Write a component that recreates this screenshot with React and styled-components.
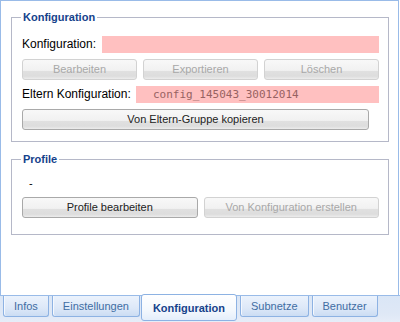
import React from 'react';
import styled, { createGlobalStyle } from 'styled-components';

const GlobalStyle = createGlobalStyle`
  html, body {
    margin: 0;
    padding: 0;
    background: #fff;
  }
  body {
    font-family: "Liberation Sans", Arial, sans-serif;
  }
  #root {
    width: 400px;
    height: 322px;
  }
`;

const Window = styled.div`
  width: 400px;
  height: 322px;
  display: flex;
  flex-direction: column;
  box-sizing: border-box;
`;

const Body = styled.div`
  width: 399px;
  height: 295px;
  box-sizing: border-box;
  border: 1px solid #99bbe8;
  border-bottom: none;
  padding: 10px 9px 0 10px;
  display: flex;
  flex-direction: column;
  gap: 11px;
  background: #fff;
`;

const Fieldset = styled.fieldset`
  margin: 0;
  padding: ${p => p.$pad};
  border: 1px solid #b5b8c8;
  min-inline-size: 0;
  display: flex;
  flex-direction: column;
  gap: 6px;
`;

const Legend = styled.legend`
  padding: 0 2px;
  margin-left: -1px;
  font-size: 11px;
  line-height: 13px;
  font-weight: bold;
  color: #15428b;
`;

const Row = styled.div`
  display: flex;
  align-items: center;
  gap: ${p => p.$gap || 0}px;
  padding-right: ${p => p.$right || 0}px;
`;

const Label = styled.div`
  width: ${p => p.$w}px;
  flex: none;
  font-size: 12px;
  line-height: 17px;
  color: #000;
`;

const Field = styled.div`
  flex: 1;
  height: 17px;
  background: #ffc0c0;
  font-family: "DejaVu Sans Mono", monospace;
  font-size: 11px;
  line-height: 17px;
  color: #976262;
  padding-left: 17px;
  box-sizing: border-box;
  white-space: nowrap;
`;

const Button = styled.button`
  flex: 1;
  height: 21px;
  margin: 0;
  padding: 0;
  border: 1px solid ${p => (p.disabled ? '#d2d2d2' : '#a9a9a9')};
  border-radius: 3px;
  background: linear-gradient(
    to bottom,
    #f8f8f8 0%,
    #f1f1f1 55%,
    #e0e0e0 58%,
    #dddddd 85%,
    #ececec 100%
  );
  font-family: "Liberation Sans", Arial, sans-serif;
  font-size: 11px;
  color: ${p => (p.disabled ? '#a8a8a8' : '#222')};
  line-height: 19px;
`;

const Dash = styled.div`
  height: 15px;
  line-height: 15px;
  font-size: 11px;
  padding-left: 7px;
  color: #000;
`;

const TabStrip = styled.div`
  height: 27px;
  box-sizing: border-box;
  border-top: 1px solid #99bbe8;
  background: linear-gradient(to bottom, #dae6f6 0%, #dfe8f6 70%, #e6edf8 100%);
  display: flex;
  align-items: flex-start;
  gap: 3px;
  padding-left: 3px;
`;

const Tab = styled.div`
  box-sizing: border-box;
  padding: 0 ${p => p.$px}px;
  border: 1px solid #8db2e3;
  border-top: none;
  border-radius: 0 0 3px 3px;
  font-size: 11px;
  white-space: nowrap;
  ${p =>
    p.$active
      ? `
    margin-top: -2px;
    margin-left: -2px;
    height: 27px;
    line-height: 26px;
    font-weight: bold;
    color: #15428b;
    border-top: 1px solid #8db2e3;
    border-radius: 3px;
    background: linear-gradient(to bottom, #ffffff 0%, #f4f8fd 60%, #e4eefb 100%);
  `
      : `
    margin-top: 0;
    height: 21px;
    line-height: 20px;
    color: #416da3;
    background: linear-gradient(to bottom, #ebf2fc 0%, #dde8f8 60%, #cbdcf3 100%);
    box-shadow: inset 1px 0 0 #f4f8fe;
  `}
`;

const tabs = [
  { name: 'Infos', px: 10 },
  { name: 'Einstellungen', px: 10 },
  { name: 'Konfiguration', px: 11, active: true },
  { name: 'Subnetze', px: 10 },
  { name: 'Benutzer', px: 10 },
];

export default function App() {
  return (
    <Window>
      <GlobalStyle />
      <Body>
        <Fieldset $pad="12px 9px 11px 10px">
          <Legend>Konfiguration</Legend>
          <Row>
            <Label $w={80}>Konfiguration:</Label>
            <Field />
          </Row>
          <Row $gap={6}>
            <Button disabled>Bearbeiten</Button>
            <Button disabled>Exportieren</Button>
            <Button disabled>Löschen</Button>
          </Row>
          <Row>
            <Label $w={114}>Eltern Konfiguration:</Label>
            <Field>config_145043_30012014</Field>
          </Row>
          <Row $right={10}>
            <Button>Von Eltern-Gruppe kopieren</Button>
          </Row>
        </Fieldset>
        <Fieldset $pad="10px 9px 16px 10px">
          <Legend>Profile</Legend>
          <Dash>-</Dash>
          <Row $gap={6}>
            <Button>Profile bearbeiten</Button>
            <Button disabled>Von Konfiguration erstellen</Button>
          </Row>
        </Fieldset>
      </Body>
      <TabStrip>
        {tabs.map(t => (
          <Tab key={t.name} $px={t.px} $active={t.active}>
            {t.name}
          </Tab>
        ))}
      </TabStrip>
    </Window>
  );
}
